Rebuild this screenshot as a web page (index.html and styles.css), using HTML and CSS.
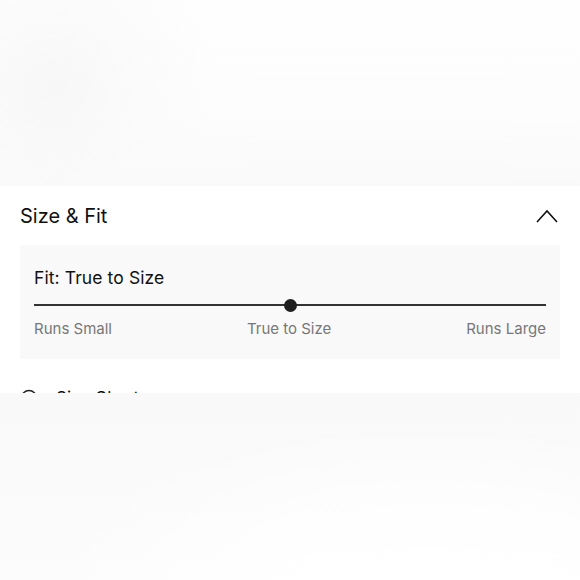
FILE: index.html
```html
<!DOCTYPE html>
<html>
<head>
<meta charset="utf-8">
<link rel="stylesheet" href="styles.css">
</head>
<body>
<div class="top-blur"></div>
<section class="panel">
  <header class="panel-head">
    <h2 class="panel-title">Size &amp; Fit</h2>
    <svg class="chevron" width="22" height="14" viewBox="0 0 22 14"><path d="M1 13 L11 2 L21 13" fill="none" stroke="#111" stroke-width="1.6"/></svg>
  </header>
  <div class="fit-box">
    <div class="fit-title">Fit: True to Size</div>
    <div class="slider">
      <div class="track"></div>
      <div class="thumb"></div>
    </div>
    <div class="labels">
      <span>Runs Small</span>
      <span>True to Size</span>
      <span>Runs Large</span>
    </div>
  </div>
  <div class="chart-row">
    <svg class="chart-icon" width="18" height="18" viewBox="0 0 18 18"><circle cx="9" cy="9" r="7.5" fill="none" stroke="#222" stroke-width="1.5"/></svg>
    <span class="chart-text">Size Chart</span>
  </div>
</section>
<div class="bottom-blur"></div>
</body>
</html>
```
FILE: styles.css
```css
html, body {
  margin: 0;
  padding: 0;
  width: 580px;
  height: 580px;
  overflow: hidden;
  background: #fff;
  font-family: "Inter", "Liberation Sans", sans-serif;
}
.top-blur {
  height: 186px;
  background:
    radial-gradient(ellipse 160px 170px at 55px 90px, #f7f7f7 0%, rgba(250,250,250,0.6) 60%, rgba(255,255,255,0) 100%),
    linear-gradient(to bottom, #fefefe 0%, #fdfdfd 60%, #f9f9f9 100%);
}
.panel {
  height: 207px;
  overflow: hidden;
  background: #fff;
  padding: 0 20px;
  box-sizing: border-box;
}
.panel-head {
  display: flex;
  justify-content: space-between;
  align-items: center;
  height: 59px;
  padding-right: 2px;
}
.panel-title {
  margin: 0;
  font-size: 20px;
  font-weight: 400;
  color: #111;
  letter-spacing: 0;
}
.chevron {
  display: block;
}
.fit-box {
  background: #f9f9f9;
  height: 114px;
  padding: 21px 14px 0;
  box-sizing: border-box;
}
.fit-title {
  font-size: 17.5px;
  color: #111;
  line-height: 24px;
  letter-spacing: 0.1px;
}
.slider {
  position: relative;
  height: 14px;
  margin-top: 8px;
  display: flex;
  align-items: center;
  justify-content: center;
}
.track {
  position: absolute;
  left: 0;
  right: 0;
  top: 6px;
  height: 2px;
  background: #333;
}
.thumb {
  position: relative;
  width: 13px;
  height: 13px;
  border-radius: 50%;
  background: #1e1e1e;
}
.labels {
  display: flex;
  justify-content: space-between;
  margin-top: 7px;
  font-size: 15px;
  color: #777;
  line-height: 20px;
}
.chart-row {
  display: flex;
  align-items: center;
  gap: 18px;
  margin-top: 29px;
}
.chart-text {
  font-size: 17px;
  color: #111;
}
.bottom-blur {
  height: 187px;
  background:
    radial-gradient(ellipse 400px 180px at 430px 210px, #ffffff 0%, rgba(255,255,255,0.8) 50%, rgba(255,255,255,0) 100%),
    linear-gradient(to bottom, #f9f9f9 0%, #fafafa 50%, #fcfcfc 100%);
}
```
